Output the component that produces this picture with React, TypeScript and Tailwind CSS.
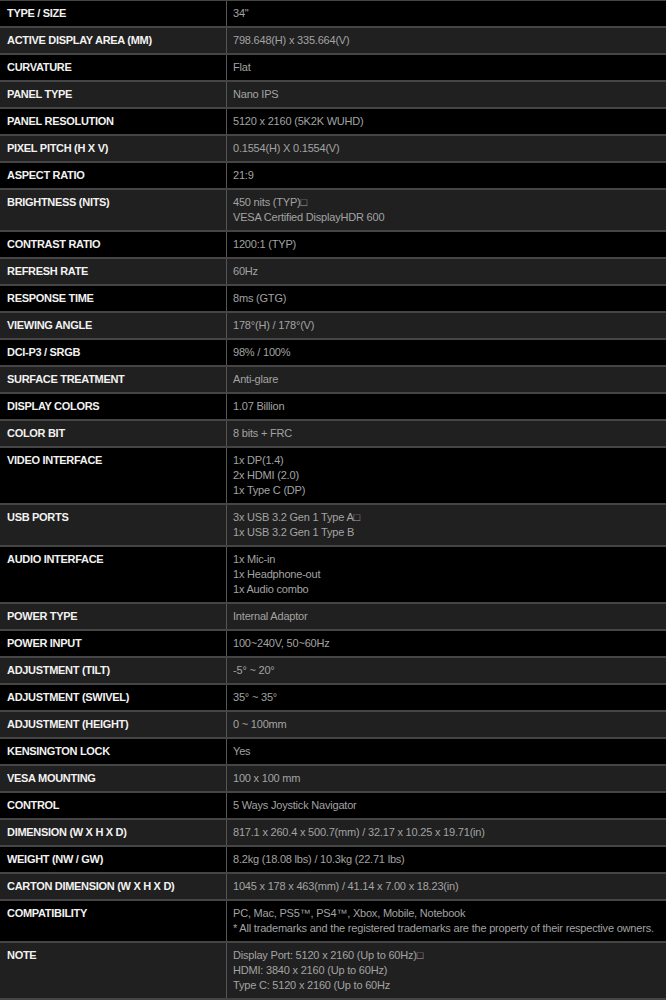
import React from 'react';

type Spec = { label: string; value: string[] };

const BOX = '\u25A1';

const specs: Spec[] = [
  { label: 'TYPE / SIZE', value: ['34"'] },
  { label: 'ACTIVE DISPLAY AREA (MM)', value: ['798.648(H) x 335.664(V)'] },
  { label: 'CURVATURE', value: ['Flat'] },
  { label: 'PANEL TYPE', value: ['Nano IPS'] },
  { label: 'PANEL RESOLUTION', value: ['5120 x 2160 (5K2K WUHD)'] },
  { label: 'PIXEL PITCH (H X V)', value: ['0.1554(H) X 0.1554(V)'] },
  { label: 'ASPECT RATIO', value: ['21:9'] },
  { label: 'BRIGHTNESS (NITS)', value: [`450 nits (TYP)${BOX}`, 'VESA Certified DisplayHDR 600'] },
  { label: 'CONTRAST RATIO', value: ['1200:1 (TYP)'] },
  { label: 'REFRESH RATE', value: ['60Hz'] },
  { label: 'RESPONSE TIME', value: ['8ms (GTG)'] },
  { label: 'VIEWING ANGLE', value: ['178°(H) / 178°(V)'] },
  { label: 'DCI-P3 / SRGB', value: ['98% / 100%'] },
  { label: 'SURFACE TREATMENT', value: ['Anti-glare'] },
  { label: 'DISPLAY COLORS', value: ['1.07 Billion'] },
  { label: 'COLOR BIT', value: ['8 bits + FRC'] },
  { label: 'VIDEO INTERFACE', value: ['1x DP(1.4)', '2x HDMI (2.0)', '1x Type C (DP)'] },
  { label: 'USB PORTS', value: [`3x USB 3.2 Gen 1 Type A${BOX}`, '1x USB 3.2 Gen 1 Type B'] },
  { label: 'AUDIO INTERFACE', value: ['1x Mic-in', '1x Headphone-out', '1x Audio combo'] },
  { label: 'POWER TYPE', value: ['Internal Adaptor'] },
  { label: 'POWER INPUT', value: ['100~240V, 50~60Hz'] },
  { label: 'ADJUSTMENT (TILT)', value: ['-5° ~ 20°'] },
  { label: 'ADJUSTMENT (SWIVEL)', value: ['35° ~ 35°'] },
  { label: 'ADJUSTMENT (HEIGHT)', value: ['0 ~ 100mm'] },
  { label: 'KENSINGTON LOCK', value: ['Yes'] },
  { label: 'VESA MOUNTING', value: ['100 x 100 mm'] },
  { label: 'CONTROL', value: ['5 Ways Joystick Navigator'] },
  { label: 'DIMENSION (W X H X D)', value: ['817.1 x 260.4 x 500.7(mm) / 32.17 x 10.25 x 19.71(in)'] },
  { label: 'WEIGHT (NW / GW)', value: ['8.2kg (18.08 lbs) / 10.3kg (22.71 lbs)'] },
  { label: 'CARTON DIMENSION (W X H X D)', value: ['1045 x 178 x 463(mm) / 41.14 x 7.00 x 18.23(in)'] },
  {
    label: 'COMPATIBILITY',
    value: [
      'PC, Mac, PS5™, PS4™, Xbox, Mobile, Notebook',
      '* All trademarks and the registered trademarks are the property of their respective owners.',
    ],
  },
  {
    label: 'NOTE',
    value: [`Display Port: 5120 x 2160 (Up to 60Hz)${BOX}`, 'HDMI: 3840 x 2160 (Up to 60Hz)', 'Type C: 5120 x 2160 (Up to 60Hz'],
  },
];

const App: React.FC = () => {
  return (
    <div
      className="w-[666px] bg-black border-t border-[#444444]"
      style={{ fontFamily: '"Liberation Sans", Arial, sans-serif' }}
    >
      {specs.map((row, i) => (
        <div
          key={row.label}
          className={`flex border-b-2 border-[#454545] ${i % 2 === 1 ? 'bg-[#202020]' : 'bg-black'}`}
        >
          {/* Label */}
          <div className="w-[227px] shrink-0 border-r border-[#555555] pl-[7px] py-[5px] text-[11px] leading-[15px] font-bold text-[#f2f2f2] tracking-[-0.3px]">
            {row.label}
          </div>

          {/* Value */}
          <div className="flex-1 pl-[6px] py-[5px] text-[11px] leading-[15px] text-[#a3a3a3] tracking-[-0.2px]">
            {row.value.map((line) => (
              <div key={line} className="whitespace-nowrap">
                {line}
              </div>
            ))}
          </div>
        </div>
      ))}
    </div>
  );
};

export default App;
